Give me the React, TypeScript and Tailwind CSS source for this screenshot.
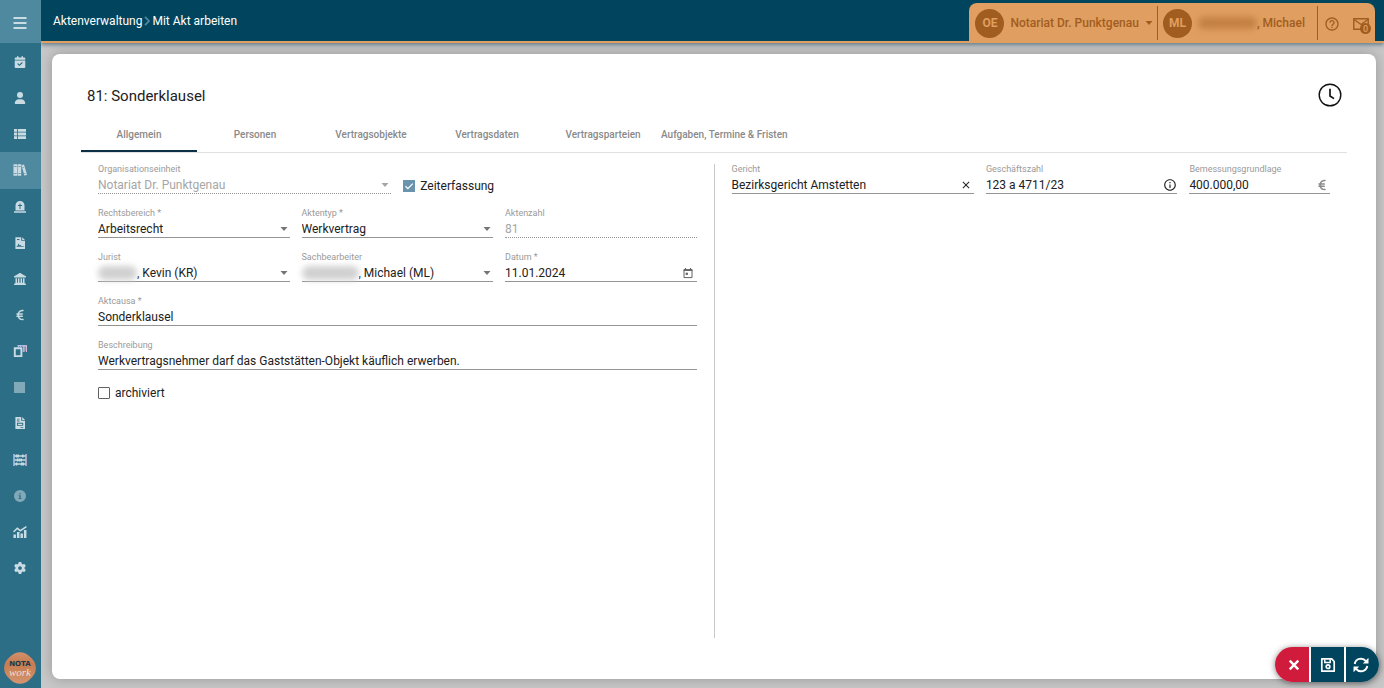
import type { ReactNode } from 'react';
import { useId } from 'react';
import {
  FaCalendarCheck,
  FaCircleInfo,
  FaEuroSign,
  FaGear,
  FaLandmark,
  FaUser,
} from 'react-icons/fa6';
import { MdClose, MdHelpOutline, MdInfoOutline } from 'react-icons/md';

function MenuIcon() {
  return (
    <svg viewBox="0 0 14 12" className="h-3 w-3.5" fill="currentColor" aria-hidden="true">
      <path d="M.5 0h13v2H.5zM.5 5h13v2H.5zM.5 10h13v2H.5z" />
    </svg>
  );
}

function ListIcon() {
  return (
    <svg viewBox="0 0 12 10" className="h-2.5 w-3" fill="currentColor" aria-hidden="true">
      <path d="M0 0h3.200v2.800H0zM4 0h8v2.800H4zM0 3.600h3.200v2.800H0zM4 3.600h8v2.800H4zM0 7.200h3.200V10H0zM4 7.200h8V10H4z" />
    </svg>
  );
}

function BooksIcon() {
  return (
    <svg viewBox="0 0 14 12" className="h-3 w-3.5" fill="currentColor" aria-hidden="true">
      <path
        fillRule="evenodd"
        d="M.5.300h3.800v11.400H.5zM1.200 2.300v.7h2.400v-.7zM1.200 9v.7h2.400V9zM4.800.300h3.400v11.400H4.800zM5.400 2.300v.7h2.200v-.7zM5.400 9v.7h2.200V9zM8.500 1.200 11 .4l3 10.400-2.500.9zM9.500 3.100l.2.700 1.200-.4-.2-.7zM11.300 9.300l.2.700 1.200-.4-.2-.7z"
      />
    </svg>
  );
}

function TombstoneIcon() {
  return (
    <svg viewBox="0 0 14 14" className="size-3.5" fill="currentColor" aria-hidden="true">
      <path
        fillRule="evenodd"
        d="M2.500 10.500V5.400a4.500 4.500 0 0 1 9 0v5.100zM6.500 3.500v1.500H4.900v1h1.600v3h1v-3h1.600V5H7.500V3.500zM1 11.300h12v1.400H1z"
      />
    </svg>
  );
}

function SignedFileIcon() {
  return (
    <svg viewBox="0 0 12 14" className="h-3.5 w-3" fill="currentColor" aria-hidden="true">
      <path
        fillRule="evenodd"
        d="M1.400 1.200h5.800v3.600H11v8.200H1.400zM8.200 1.200 11 3.900H8.200zM3 3v1h2.400V3zM2.600 10.800h7v-.9H7.300l-.6-1-1 .7-1.100-2-1.200 2.300h-.8z"
      />
    </svg>
  );
}

function InvoiceFileIcon() {
  return (
    <svg viewBox="0 0 12 14" className="h-3.5 w-3" fill="currentColor" aria-hidden="true">
      <path
        fillRule="evenodd"
        d="M1.400 1h5.800v3.800H11V13H1.400zM8.200 1 11 3.900H8.200zM3 2.800v.8h2.400v-.8zM3 4.600v.8h2.400v-.8zM3 6.800v3h6.200v-3zM4 7.700h4.200v1.200H4zM6.500 11v.8h2.700V11z"
      />
    </svg>
  );
}

function CopiesIcon() {
  return (
    <svg viewBox="0 0 14 12" className="h-3 w-3.5" fill="none" aria-hidden="true">
      <path d="M.8 3.200h8.200M1.800 3v8.200h6.600V3" stroke="currentColor" strokeWidth="1.900" />
      <path d="M4.500.800h9.300" stroke="#d9cdea" strokeWidth="1.200" />
      <path d="M10.300 .5v6.500M11.900 .5v6.500M13.500 .5v6.500" stroke="#d3b9dc" strokeWidth="1.100" />
      <path d="M5.500 .5v1.800M7.500 .5v1.800" stroke="#a9c6f2" strokeWidth="1" />
    </svg>
  );
}

function AbacusIcon() {
  return (
    <svg viewBox="0 0 14 12" className="h-3 w-3.5" fill="none" aria-hidden="true">
      <path d="M1 0v12" stroke="#a9c6f2" strokeWidth="1.500" />
      <path d="M13 0v12" stroke="#d5b5d5" strokeWidth="1.500" />
      <path d="M1.500 2h11M1.500 6h11M1.500 10h11" stroke="currentColor" strokeWidth="1.500" />
      <path
        d="M3.500 .5v3M5.200 .5v3M9.800 .5v3M4.500 4.500v3M6.500 4.500v3M8.300 4.500v3M3.500 8.500v3M8.600 8.500v3M10.300 8.500v3"
        stroke="currentColor"
        strokeWidth="1.500"
      />
    </svg>
  );
}

function StatsIcon() {
  return (
    <svg viewBox="0 0 14 12" className="h-3 w-3.5" fill="none" stroke="currentColor" aria-hidden="true">
      <path d="M.5 6 4.300 2.300l3 2.400L13.400.700" strokeWidth="1.500" />
      <path d="M1.700 12V8.500M5.200 12V6M8.700 12V7.500M12.200 12V4" strokeWidth="2.500" />
    </svg>
  );
}

function LogoBadge() {
  return (
    <svg viewBox="0 0 32 32" className="col-start-1 row-start-1 size-8" aria-hidden="true">
      <defs>
        <linearGradient id="badge" x1="0" y1="0" x2="1" y2="1">
          <stop offset="0" stopColor="#d99a75" />
          <stop offset=".4" stopColor="#c67c51" />
          <stop offset="1" stopColor="#d79b76" />
        </linearGradient>
      </defs>
      <rect x="1" y="1" width="30" height="30" rx="13" transform="rotate(45 16 16)" fill="url(#badge)" />
    </svg>
  );
}

function SaveIcon() {
  return (
    <svg viewBox="0 0 16 16" className="size-4" fill="none" stroke="currentColor" strokeWidth="1.700" aria-hidden="true">
      <path d="M1.800 1.800h9.900l2.500 2.700v9.700H1.800z" strokeLinejoin="round" />
      <path d="M4.800 2.500v3h5.400v-3" strokeWidth="1.500" />
      <circle cx="8" cy="9.700" r="1.800" strokeWidth="1.700" />
    </svg>
  );
}

function RefreshIcon() {
  return (
    <svg viewBox="0 0 16 16" className="size-4" fill="none" stroke="currentColor" strokeWidth="1.900" aria-hidden="true">
      <path d="M1.700 7A6.300 6.300 0 0 1 12.900 4.200M14.300 9A6.300 6.300 0 0 1 3.100 11.800" />
      <path d="M15.500 .8v5.700H9.800zM.5 15.200V9.500h5.700z" fill="currentColor" stroke="none" />
    </svg>
  );
}

function CancelIcon() {
  return (
    <svg viewBox="0 0 12 12" className="size-3" fill="none" stroke="currentColor" strokeWidth="2.400" aria-hidden="true">
      <path d="m1.700 1.700 8.600 8.600M10.300 1.700l-8.600 8.600" />
    </svg>
  );
}

function MailIcon() {
  return (
    <svg viewBox="0 0 16 12" className="h-3 w-4" fill="none" stroke="currentColor" strokeWidth="1.400" aria-hidden="true">
      <path d="M.8.800h14.400v10.400H.8z" />
      <path d="m1 1.500 7 5 7-5" />
    </svg>
  );
}

function CalendarIcon() {
  return (
    <svg viewBox="0 0 10 11" className="h-3 w-2.5" fill="none" stroke="currentColor" aria-hidden="true">
      <path d="M1 2.200h8v7.900H1z" strokeWidth="1" />
      <path d="M.6 2.700h8.800" strokeWidth="1.500" />
      <path d="M2.500 .6v1.500M7.500 .6v1.500" strokeWidth="1.100" />
      <path d="M2.600 5.200h2.300v2.200H2.600z" fill="currentColor" stroke="none" />
    </svg>
  );
}

function Caret({ className = '' }: { className?: string }) {
  return (
    <svg viewBox="0 0 8 4" className={`h-1 w-2 ${className}`} fill="currentColor" aria-hidden="true">
      <path d="M.5 0h7L4 4z" />
    </svg>
  );
}

const navItems: { label: string; icon: ReactNode; active?: boolean; dim?: boolean }[] = [
  { label: 'Kalender', icon: <FaCalendarCheck className="size-3" /> },
  { label: 'Personen', icon: <FaUser className="size-3" /> },
  { label: 'Listen', icon: <ListIcon /> },
  { label: 'Akten', icon: <BooksIcon />, active: true },
  { label: 'Verlassenschaften', icon: <TombstoneIcon /> },
  { label: 'Urkunden', icon: <SignedFileIcon /> },
  { label: 'Register', icon: <FaLandmark className="size-3" /> },
  { label: 'Finanzen', icon: <FaEuroSign className="size-3" /> },
  { label: 'Kopien', icon: <CopiesIcon /> },
  { label: 'Ablage', icon: <span className="size-[11px] bg-current" />, dim: true },
  { label: 'Rechnungen', icon: <InvoiceFileIcon /> },
  { label: 'Kalkulation', icon: <AbacusIcon /> },
  { label: 'Information', icon: <FaCircleInfo className="size-3" />, dim: true },
  { label: 'Statistik', icon: <StatsIcon /> },
  { label: 'Einstellungen', icon: <FaGear className="size-3" /> },
];

function Sidebar() {
  return (
    <aside className="relative z-20 flex w-[41px] shrink-0 flex-col bg-[#2d6e87] text-[#c9dce3]">
      <button aria-label="Menü" className="flex h-[43px] items-center justify-center bg-[#4f89a0] pr-0.5 pt-0.5">
        <MenuIcon />
      </button>
      <nav className="mt-px flex h-[542px] flex-col">
        {navItems.map((item) => (
          <a
            key={item.label}
            href="#"
            aria-label={item.label}
            className={`flex flex-1 items-center justify-center pr-0.5 ${item.active ? 'bg-[#4f89a0]' : ''} ${
              item.dim ? 'text-[#82a9b8]' : ''
            }`}
          >
            {item.icon}
          </a>
        ))}
      </nav>
      <div className="mb-1 ml-1 mt-auto grid size-8 place-items-center">
        <LogoBadge />
        <div className="col-start-1 row-start-1 flex flex-col items-center">
          <span className="font-['DejaVu_Sans'] text-[7px] font-bold leading-[8px] text-[#17394a]">NOTA</span>
          <span className="font-['Liberation_Serif'] text-[11px] italic leading-[8px] text-[#f3dfd2]">work</span>
        </div>
      </div>
    </aside>
  );
}

function Header() {
  return (
    <header className="relative z-10 flex h-[43px] shrink-0 justify-between border-b-2 border-[#e09e60] bg-[#00455d] shadow-[0_2px_4px_rgba(40,80,100,0.6)]">
      <div className="flex items-center gap-0.5 pl-3 text-xs text-white">
        <a href="#">Aktenverwaltung</a>
        <svg viewBox="0 0 6 10" className="h-2.5 w-1.5 text-[#4f89a0]" fill="none" stroke="currentColor" strokeWidth="1.700" aria-hidden="true">
          <path d="m1 .8 4 4.200-4 4.200" />
        </svg>
        <span>Mit Akt arbeiten</span>
      </div>
      <div className="mr-[9px] mt-[3px] flex items-center rounded-t-lg bg-[#e09e60] pt-0.5 text-xs font-medium text-[#a05d1f]">
        <button className="flex h-[34px] items-center border-r border-[#a05d1f] pl-1.5 pr-1">
          <span className="flex size-[29px] items-center justify-center rounded-full bg-[#a05d1f] font-bold text-[#e09e60]">
            OE
          </span>
          <span className="ml-1.5">Notariat Dr. Punktgenau</span>
          <Caret className="ml-1.5" />
        </button>
        <button className="flex h-[34px] items-center border-r border-[#a05d1f] pl-[5px] pr-3">
          <span className="flex size-[29px] items-center justify-center rounded-full bg-[#a05d1f] font-bold text-[#e09e60]">
            ML
          </span>
          <span className="ml-1.5 h-3 w-[59px] rounded-full bg-[#a05d1f]/45 blur-[3px]" />
          <span>, Michael</span>
        </button>
        <button aria-label="Hilfe" className="ml-1.5 pt-0.5">
          <MdHelpOutline className="size-4" />
        </button>
        <button aria-label="Nachrichten" className="relative ml-[13px] mr-1.5 pt-0.5">
          <MailIcon />
          <span className="absolute -bottom-1 -right-0.5 flex size-[11px] items-center justify-center rounded-full bg-[#a05d1f] text-[9px] text-[#e09e60]">
            0
          </span>
        </button>
      </div>
    </header>
  );
}

const tabs = ['Allgemein', 'Personen', 'Vertragsobjekte', 'Vertragsdaten', 'Vertragsparteien', 'Aufgaben, Termine & Fristen'];

function Tabs() {
  return (
    <div role="tablist" className="flex h-9 border-b border-[#e0e0e0] text-[10px] font-medium text-[#8a8a8a]">
      {tabs.map((tab, i) => (
        <button
          key={tab}
          role="tab"
          aria-selected={i === 0}
          className={`min-w-[116px] whitespace-nowrap border-b-2 pt-0.5 ${i === 0 ? 'border-[#0d3049]' : 'border-transparent'}`}
        >
          {tab}
        </button>
      ))}
    </div>
  );
}

function Field({
  label,
  value,
  select,
  disabled,
  masked,
  suffix,
  className,
}: {
  label: string;
  value: string;
  select?: boolean;
  disabled?: boolean;
  masked?: 'short' | 'long';
  suffix?: ReactNode;
  className: string;
}) {
  const id = useId();
  const control = 'min-w-0 flex-1 appearance-none bg-transparent outline-none';
  return (
    <div className={`flex h-[30px] flex-col ${className}`}>
      <label htmlFor={id} className="whitespace-nowrap text-[9px] leading-[11px] text-[#9a9a9a]">
        {label}
      </label>
      <div
        className={`flex h-[19px] items-center border-b pt-0.5 text-xs ${
          disabled ? 'border-dotted border-[#949494] text-[#a6a6a6]' : 'border-[#949494] text-[#212121]'
        }`}
      >
        {masked && (
          <span
            className={`h-3.5 rounded-full bg-[#d0d0d0] blur-[3px] ${masked === 'short' ? 'w-[39px]' : 'w-[57px]'}`}
          />
        )}
        {select ? (
          <>
            <select id={id} disabled={disabled} className={`${control} opacity-100`} defaultValue={value}>
              <option>{value}</option>
            </select>
            <Caret className={`mr-0.5 ${disabled ? 'text-[#a6a6a6]' : 'text-[#757575]'}`} />
          </>
        ) : (
          <input id={id} disabled={disabled} className={control} defaultValue={value} />
        )}
        {suffix}
      </div>
    </div>
  );
}

function GeneralForm() {
  return (
    <form className="grid flex-1 auto-rows-min grid-cols-12 gap-x-3 gap-y-3.5 px-[17px]">
      <Field className="col-span-6" label="Organisationseinheit" value="Notariat Dr. Punktgenau" select disabled />
      <label className="col-span-6 flex items-center gap-[5px] pt-3.5 text-xs text-[#212121]">
        <span className="relative flex size-3">
          <input type="checkbox" defaultChecked className="size-3 appearance-none bg-[#6a93ad]" />
          <svg viewBox="0 0 12 12" className="pointer-events-none absolute inset-0" fill="none" stroke="white" strokeWidth="1.300" aria-hidden="true">
            <path d="m2.500 6.200 2.400 2.400 4.800-5" />
          </svg>
        </span>
        Zeiterfassung
      </label>
      <Field className="col-span-4" label="Rechtsbereich *" value="Arbeitsrecht" select />
      <Field className="col-span-4" label="Aktentyp *" value="Werkvertrag" select />
      <Field className="col-span-4" label="Aktenzahl" value="81" disabled />
      <Field className="col-span-4" label="Jurist" value=", Kevin (KR)" select masked="short" />
      <Field className="col-span-4" label="Sachbearbeiter" value=", Michael (ML)" select masked="long" />
      <Field
        className="col-span-4"
        label="Datum *"
        value="11.01.2024"
        suffix={
          <button type="button" aria-label="Kalender öffnen" className="mr-1 text-[#616161]">
            <CalendarIcon />
          </button>
        }
      />
      <Field className="col-span-12" label="Aktcausa *" value="Sonderklausel" />
      <Field
        className="col-span-12"
        label="Beschreibung"
        value="Werkvertragsnehmer darf das Gaststätten-Objekt käuflich erwerben."
      />
      <label className="col-span-12 flex items-center gap-[5px] pt-px text-xs text-[#212121]">
        <input type="checkbox" className="size-3 appearance-none rounded-[1px] border border-[#616161]" />
        archiviert
      </label>
    </form>
  );
}

function CourtForm() {
  return (
    <form className="grid flex-1 auto-rows-min grid-cols-12 gap-x-3 border-l border-[#c8c8c8] px-[17px]">
      <Field
        className="col-span-5"
        label="Gericht"
        value="Bezirksgericht Amstetten"
        suffix={
          <button type="button" aria-label="Leeren" className="mr-0.5">
            <MdClose className="size-3" />
          </button>
        }
      />
      <Field
        className="col-span-4"
        label="Geschäftszahl"
        value="123 a 4711/23"
        suffix={
          <button type="button" aria-label="Hinweis">
            <MdInfoOutline className="size-3.5" />
          </button>
        }
      />
      <Field
        className="col-span-3"
        label="Bemessungsgrundlage"
        value="400.000,00"
        suffix={<FaEuroSign className="mr-0.5 size-3 text-[#8a8a8a]" />}
      />
    </form>
  );
}

function ActionBar() {
  return (
    <div className="fixed bottom-1.5 right-[5px] z-30 flex h-[35px] gap-0.5 overflow-hidden rounded-full bg-white text-white shadow-[0_1px_6px_rgba(0,0,0,0.5)]">
      <button aria-label="Abbrechen" className="flex w-[34px] items-center justify-center bg-[#d11b3c] pl-1">
        <CancelIcon />
      </button>
      <button aria-label="Speichern" className="flex w-[33px] items-center justify-center bg-[#00455d]">
        <SaveIcon />
      </button>
      <button aria-label="Aktualisieren" className="flex w-[33px] items-center justify-center bg-[#00455d] pr-1">
        <RefreshIcon />
      </button>
    </div>
  );
}

export default function App() {
  return (
    <div className="flex min-h-screen bg-[#c8c8c8] font-[Roboto,sans-serif]">
      <Sidebar />
      <div className="flex min-w-0 flex-1 flex-col">
        <Header />
        <main className="mb-[9px] ml-[11px] mr-2 mt-[11px] flex flex-1 flex-col rounded-lg bg-white px-[29px] pb-[41px] shadow-[0_0_14px_rgba(0,0,0,0.25)]">
          <div className="flex h-[63px] items-end justify-between pl-1.5 pr-[5px] pt-5">
            <h1 className="mb-[9px] text-[15px] leading-6 text-[#212121]">81: Sonderklausel</h1>
            <button aria-label="Zeiterfassung" className="mb-[10px]">
              <svg viewBox="0 0 24 24" className="size-6" fill="none" stroke="#111" aria-hidden="true">
                <circle cx="12" cy="12" r="10.800" strokeWidth="1.400" />
                <path d="M12 5.700V13l4 2.600" strokeWidth="1.700" />
              </svg>
            </button>
          </div>
          <Tabs />
          <div className="flex flex-1 pt-[11px]">
            <GeneralForm />
            <CourtForm />
          </div>
        </main>
      </div>
      <ActionBar />
    </div>
  );
}
